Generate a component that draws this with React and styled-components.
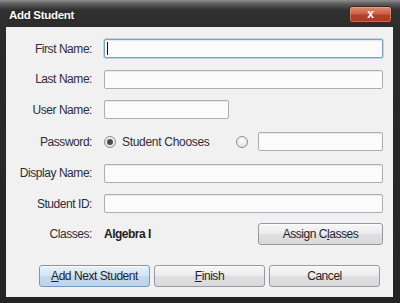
import React from 'react'
import styled, { createGlobalStyle } from 'styled-components'

const Global = createGlobalStyle`
  html, body {
    margin: 0;
    padding: 0;
    background: #262626;
  }
  * { box-sizing: border-box; }
`

const Window = styled.div`
  width: 400px;
  height: 303px;
  display: flex;
  flex-direction: column;
  background: linear-gradient(#8e8e8e 0, #5c5c5c 4px, #303030 10px, #2a2a2a 40px, #242424 100%);
  padding: 0 7px 6px 6px;
  font-family: "Liberation Sans", Arial, sans-serif;
`

const TitleBar = styled.div`
  height: 27px;
  display: flex;
  align-items: center;
  justify-content: space-between;
  padding: 2px 1px 0 3px;
`

const Title = styled.div`
  color: #fff;
  font-size: 11.5px;
  font-weight: bold;
  letter-spacing: -0.3px;
  text-shadow: 0 0 2px rgba(0,0,0,0.6);
`

const CloseButton = styled.div`
  width: 43px;
  height: 17px;
  margin-top: -1px;
  border: 1px solid #4a2218;
  border-radius: 3px;
  background: linear-gradient(#e08a72 0, #c9604a 45%, #b2412b 55%, #a83b26 100%);
  box-shadow: inset 0 0 0 1px rgba(255,200,180,0.35);
  display: flex;
  align-items: center;
  justify-content: center;
  color: #fff;
  font-size: 12px;
  font-weight: bold;
  line-height: 1;
`

const Body = styled.div`
  flex: 1;
  background: #f1f1f1;
  display: flex;
  flex-direction: column;
  padding: 6px 10px 0 0;
`

const Form = styled.div`
  display: grid;
  grid-template-columns: 86px 1fr;
  grid-template-rows: 31px 30px 31px 33px 30px 31px 30px;
  column-gap: 12px;
  align-items: center;
`

const Label = styled.div`
  text-align: right;
  font-size: 12px;
  letter-spacing: -0.45px;
  color: #2e2c3a;
`

const Field = styled.div`
  position: relative;
  height: 19px;
  width: ${p => (p.width ? `${p.width}px` : '100%')};
  background: #fbfbfb;
  border: 1px solid ${p => (p.focused ? '#7a9fc8' : '#adadb3')};
  border-radius: 2px;
  box-shadow: inset 0 1px 1px rgba(0,0,0,0.08)${p => (p.focused ? ', 0 0 0 1px rgba(140,178,218,0.45)' : '')};
`

const Caret = styled.span`
  position: absolute;
  left: 2px;
  top: 2px;
  width: 1px;
  height: 13px;
  background: #111;
`

const Inline = styled.div`
  display: flex;
  align-items: center;
`

const Radio = styled.span`
  width: 12px;
  height: 12px;
  border-radius: 50%;
  border: 1px solid #8d8d96;
  background: radial-gradient(circle at 50% 35%, #ffffff 0, #e4e4e8 70%, #cfcfd6 100%);
  display: flex;
  align-items: center;
  justify-content: center;
  flex-shrink: 0;
  margin-right: ${p => p.gap || 0}px;
  &::after {
    content: '';
    display: ${p => (p.checked ? 'block' : 'none')};
    width: 6px;
    height: 6px;
    border-radius: 50%;
    background: #4a4a52;
  }
`

const RadioText = styled.span`
  font-size: 12px;
  letter-spacing: -0.3px;
  color: #2e2c3a;
  flex: 1;
`

const Value = styled.span`
  font-size: 12px;
  font-weight: bold;
  letter-spacing: -0.5px;
  color: #1e1e26;
  flex: 1;
`

const Button = styled.button`
  height: 22px;
  width: ${p => p.width}px;
  padding: 0;
  font-family: "Liberation Sans", Arial, sans-serif;
  font-size: 12px;
  letter-spacing: -0.45px;
  color: #1e1e28;
  border-radius: 3px;
  border: 1px solid ${p => (p.primary ? '#7598c0' : '#9898a4')};
  background: ${p =>
    p.primary
      ? 'linear-gradient(#e6f0fa 0, #d3e4f4 50%, #c3d9ef 51%, #bdd5ec 100%)'
      : 'linear-gradient(#f7f7f7 0, #ebebeb 50%, #dfdfe2 51%, #d9d9dc 100%)'};
  box-shadow: inset 0 1px 0 rgba(255,255,255,0.8);
  u { text-decoration: underline; }
`

const ButtonBar = styled.div`
  display: flex;
  justify-content: flex-end;
  gap: 4px;
  margin-top: 16px;
  padding-right: 3px;
`

const App = () => (
  <>
    <Global />
    <Window>
      <TitleBar>
        <Title>Add Student</Title>
        <CloseButton>x</CloseButton>
      </TitleBar>
      <Body>
        <Form>
          <Label>First Name:</Label>
          <Field focused><Caret /></Field>

          <Label>Last Name:</Label>
          <Field />

          <Label>User Name:</Label>
          <Field width={125} />

          <Label>Password:</Label>
          <Inline>
            <Radio checked gap={6} />
            <RadioText>Student Chooses</RadioText>
            <Radio gap={10} />
            <Field width={125} />
          </Inline>

          <Label>Display Name:</Label>
          <Field />

          <Label>Student ID:</Label>
          <Field />

          <Label>Classes:</Label>
          <Inline>
            <Value>Algebra I</Value>
            <Button width={125}>Assign C<u>l</u>asses</Button>
          </Inline>
        </Form>
        <ButtonBar>
          <Button primary width={111}><u>A</u>dd Next Student</Button>
          <Button width={111}><u>F</u>inish</Button>
          <Button width={111}>Cancel</Button>
        </ButtonBar>
      </Body>
    </Window>
  </>
)

export default App
